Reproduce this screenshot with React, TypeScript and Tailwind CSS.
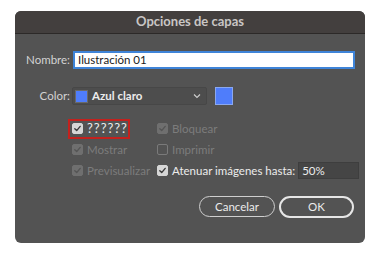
import { ReactNode } from "react";

const font = { fontFamily: "Lato, 'Open Sans', sans-serif" };

function Check({ checked, disabled }: { checked?: boolean; disabled?: boolean }) {
  const box = checked
    ? disabled
      ? "bg-[#6f6f6f] border-[#6f6f6f]"
      : "bg-[#d6d6d6] border-[#d6d6d6]"
    : "bg-transparent border-[#7a7a7a]";
  const stroke = disabled ? "#555555" : "#3a3a3a";
  return (
    <span className={`w-[11px] h-[11px] rounded-[2px] border flex items-center justify-center shrink-0 ${box}`}>
      {checked && (
        <svg width="9" height="9" viewBox="0 0 9 9">
          <path d="M1.8 4.8 L3.7 6.6 L7.2 2.4" fill="none" stroke={stroke} strokeWidth="1.4" strokeLinecap="round" strokeLinejoin="round" />
        </svg>
      )}
    </span>
  );
}

function Option({ label, checked, disabled }: { label: ReactNode; checked?: boolean; disabled?: boolean }) {
  return (
    <div className={`flex items-center gap-[4px] text-[11.5px] ${disabled ? "text-[#7c7c7c]" : "text-[#ececec]"}`}>
      <Check checked={checked} disabled={disabled} />
      <span>{label}</span>
    </div>
  );
}

export default function App() {
  return (
    <div className="w-[385px] h-[257px] bg-white pt-[11px] pl-[15px]" style={font}>
      <div className="w-[350px] h-[232px] rounded-[6px] bg-[#535353] overflow-hidden flex flex-col">
        <div className="h-[23px] bg-[#433f3e] border-b border-[#2c2928] flex items-center justify-center text-[13px] font-bold text-[#c9c6c5]">
          Opciones de capas
        </div>

        <div className="flex flex-col pt-[17px]">
          <div className="flex items-center">
            <span className="w-[55px] text-right text-[11.5px] text-[#d2d2d2]">Nombre:</span>
            <div className="ml-[3px] w-[282px] h-[18px] bg-white border-2 border-[#3f84d8] flex items-center px-[3px] text-[11.5px] text-[#1a1a1a]">
              Ilustración 01
            </div>
          </div>

          <div className="flex items-center mt-[18px]">
            <span className="w-[55px] text-right text-[11.5px] text-[#d2d2d2]">Color:</span>
            <div className="ml-[2px] w-[135px] h-[18px] bg-[#4d4d4d] border border-[#474747] rounded-[2px] flex items-center px-[2px] gap-[4px]">
              <span className="w-[13px] h-[13px] bg-[#4f7dfb] border border-[#6a6a6a]" />
              <span className="text-[11.5px] font-bold text-[#ececec]">Azul claro</span>
              <svg className="ml-auto mr-[3px]" width="8" height="6" viewBox="0 0 8 6">
                <path d="M1 1.5 L4 4.5 L7 1.5" fill="none" stroke="#cfcfcf" strokeWidth="1.1" />
              </svg>
            </div>
            <span className="ml-[8px] w-[18px] h-[18px] bg-[#4f7dfb] border border-[#8aa8f0]" />
          </div>

          <div className="grid grid-cols-[89px_auto] auto-rows-[21px] items-center mt-[13px] pl-[53px]">
            <div className="w-[62px] h-[20px] border-2 border-[#c4211d] flex items-center pl-[2px]">
              <Option label={<span className="tracking-[1px] text-[13px]">??????</span>} checked />
            </div>
            <Option label="Bloquear" checked disabled />
            <div className="pl-[4px]">
              <Option label="Mostrar" checked disabled />
            </div>
            <Option label="Imprimir" disabled />
            <div className="pl-[4px]">
              <Option label="Previsualizar" checked disabled />
            </div>
            <div className="flex items-center">
              <Option label="Atenuar imágenes hasta:" checked />
              <div className="ml-[3px] w-[61px] h-[17px] bg-[#454545] border border-[#3e3e3e] flex items-center px-[3px] text-[11.5px] text-[#ececec]">
                50%
              </div>
            </div>
          </div>

          <div className="flex justify-end gap-[4px] mt-[15px] pr-[11px]">
            <button className="w-[76px] h-[21px] rounded-full border border-[#cfcfcf] text-[11.5px] text-[#ececec]">Cancelar</button>
            <button className="w-[75px] h-[22px] rounded-full border-2 border-[#e6e6e6] text-[11.5px] text-[#ececec]">OK</button>
          </div>
        </div>
      </div>
    </div>
  );
}
